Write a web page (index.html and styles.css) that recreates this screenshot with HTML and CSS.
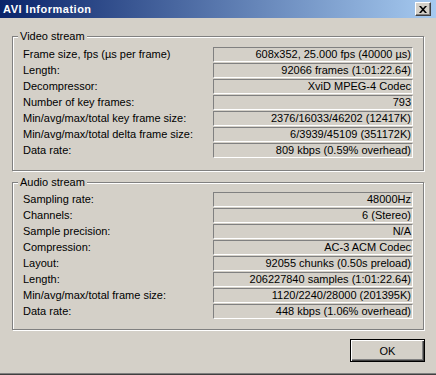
FILE: index.html
```html
<!DOCTYPE html>
<html lang="en">
<head>
    <meta charset="UTF-8">
    <title>AVI Information</title>
    <link rel="stylesheet" href="styles.css">
</head>
<body>
    <div class="window">
        <div class="titlebar">
            <span class="title">AVI Information</span>
            <button class="close-btn" aria-label="Close">
                <svg width="8" height="7" viewBox="0 0 8 7">
                    <path d="M0 0h2l2 2.3 2-2.3h2L5 3.5 8 7H6L4 4.7 2 7H0l3-3.5z" fill="#000"/>
                </svg>
            </button>
        </div>

        <div class="dialog">
            <fieldset class="group video-group">
                <legend>Video stream</legend>
                <div class="rows">
                    <span class="label">Frame size, fps (µs per frame)</span>
                    <span class="value">608x352, 25.000 fps (40000 µs)</span>
                    <span class="label">Length:</span>
                    <span class="value">92066 frames (1:01:22.64)</span>
                    <span class="label">Decompressor:</span>
                    <span class="value">XviD MPEG-4 Codec</span>
                    <span class="label">Number of key frames:</span>
                    <span class="value">793</span>
                    <span class="label">Min/avg/max/total key frame size:</span>
                    <span class="value">2376/16033/46202 (12417K)</span>
                    <span class="label">Min/avg/max/total delta frame size:</span>
                    <span class="value">6/3939/45109 (351172K)</span>
                    <span class="label">Data rate:</span>
                    <span class="value">809 kbps (0.59% overhead)</span>
                </div>
            </fieldset>

            <fieldset class="group audio-group">
                <legend>Audio stream</legend>
                <div class="rows">
                    <span class="label">Sampling rate:</span>
                    <span class="value">48000Hz</span>
                    <span class="label">Channels:</span>
                    <span class="value">6 (Stereo)</span>
                    <span class="label">Sample precision:</span>
                    <span class="value">N/A</span>
                    <span class="label">Compression:</span>
                    <span class="value">AC-3 ACM Codec</span>
                    <span class="label">Layout:</span>
                    <span class="value">92055 chunks (0.50s preload)</span>
                    <span class="label">Length:</span>
                    <span class="value">206227840 samples (1:01:22.64)</span>
                    <span class="label">Min/avg/max/total frame size:</span>
                    <span class="value">1120/2240/28000 (201395K)</span>
                    <span class="label">Data rate:</span>
                    <span class="value">448 kbps (1.06% overhead)</span>
                </div>
            </fieldset>

            <div class="buttons">
                <button class="ok-btn">OK</button>
            </div>
        </div>
    </div>
</body>
</html>
```

FILE: styles.css
```css
/* Reset */
* {
    margin: 0;
    padding: 0;
    box-sizing: border-box;
}

body {
    background-color: #d4d0c8;
    font-family: 'Liberation Sans', Arial, sans-serif;
    font-size: 11px;
    color: #000;
}

/* Window frame */
.window {
    width: 436px;
    height: 375px;
    border-bottom: 1px solid #404040;
    box-shadow: inset 0 -1px 0 #808080;
}

/* Caption bar */
.titlebar {
    height: 18px;
    display: flex;
    align-items: center;
    justify-content: space-between;
    padding: 0 5px 0 3px;
    background: linear-gradient(to right, #0a246a, #a6caf0);
}

.title {
    color: #fff;
    font-weight: bold;
    font-size: 11px;
    letter-spacing: 0.5px;
}

.close-btn {
    width: 16px;
    height: 14px;
    display: flex;
    align-items: center;
    justify-content: center;
    background-color: #d4d0c8;
    border: 1px solid;
    border-color: #fff #404040 #404040 #fff;
    box-shadow: inset -1px -1px 0 #808080;
}

/* Dialog body */
.dialog {
    padding: 12px 12px 0 12px;
}

/* Group boxes (etched) */
.group {
    width: 412px;
    border: 1px solid #808080;
    box-shadow: inset 1px 1px 0 #fff, 1px 1px 0 #fff;
    padding: 4px 10px 12px 10px;
}

.group legend {
    margin-left: -5px;
    padding: 0 2px;
    line-height: 13px;
    background-color: #d4d0c8;
}

.audio-group {
    margin-top: 5px;
    padding-top: 3px;
    padding-bottom: 10px;
}

.rows {
    display: grid;
    grid-template-columns: 190px 200px;
    grid-auto-rows: 15px;
    row-gap: 1px;
}

.label {
    line-height: 15px;
    white-space: nowrap;
}

/* Sunken static value fields */
.value {
    border: 1px solid;
    border-color: #808080 #fff #fff #808080;
    text-align: right;
    padding-right: 1px;
    line-height: 13px;
    white-space: nowrap;
}

/* Button row */
.buttons {
    display: flex;
    justify-content: flex-end;
    margin-top: 9px;
}

.ok-btn {
    width: 75px;
    height: 23px;
    margin-right: -1px;
    font-family: 'Liberation Sans', Arial, sans-serif;
    font-size: 11px;
    background-color: #d4d0c8;
    border: 1px solid #000;
    box-shadow: inset 1px 1px 0 #fff, inset -1px -1px 0 #404040, inset -2px -2px 0 #808080;
}
```
